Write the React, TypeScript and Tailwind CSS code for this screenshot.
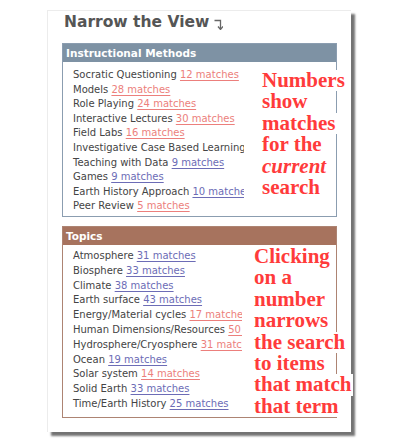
const red = "text-[#ec7f7c] decoration-[#ec7f7c]";
const blue = "text-[#6c6cb6] decoration-[#6c6cb6]";

type Item = { label: string; link?: string; tone?: "red" | "blue" };

const methods: Item[] = [
  { label: "Socratic Questioning", link: "12 matches", tone: "red" },
  { label: "Models", link: "28 matches", tone: "red" },
  { label: "Role Playing", link: "24 matches", tone: "red" },
  { label: "Interactive Lectures", link: "30 matches", tone: "red" },
  { label: "Field Labs", link: "16 matches", tone: "red" },
  { label: "Investigative Case Based Learning" },
  { label: "Teaching with Data", link: "9 matches", tone: "blue" },
  { label: "Games", link: "9 matches", tone: "blue" },
  { label: "Earth History Approach", link: "10 matches", tone: "blue" },
  { label: "Peer Review", link: "5 matches", tone: "red" },
];

const topics: Item[] = [
  { label: "Atmosphere", link: "31 matches", tone: "blue" },
  { label: "Biosphere", link: "33 matches", tone: "blue" },
  { label: "Climate", link: "38 matches", tone: "blue" },
  { label: "Earth surface", link: "43 matches", tone: "blue" },
  { label: "Energy/Material cycles", link: "17 matches", tone: "red" },
  { label: "Human Dimensions/Resources", link: "50 matches", tone: "red" },
  { label: "Hydrosphere/Cryosphere", link: "31 matches", tone: "red" },
  { label: "Ocean", link: "19 matches", tone: "blue" },
  { label: "Solar system", link: "14 matches", tone: "red" },
  { label: "Solid Earth", link: "33 matches", tone: "blue" },
  { label: "Time/Earth History", link: "25 matches", tone: "blue" },
];

function Row({ item }: { item: Item }) {
  return (
    <li className="whitespace-nowrap">
      {item.label}
      {item.link && (
        <>
          {" "}
          <a href="#" className={`underline underline-offset-2 ${item.tone === "red" ? red : blue}`}>
            {item.link}
          </a>
        </>
      )}
    </li>
  );
}

function Note({ lines }: { lines: React.ReactNode[] }) {
  return (
    <div className="flex w-max flex-col items-start whitespace-nowrap font-['Liberation_Serif',serif] font-bold text-[21px] leading-[21.4px] text-[#ff3b3b]">
      {lines.map((l, i) => (
        <span key={i} className="bg-white pl-[11px] pr-[2px]">
          {l}
        </span>
      ))}
    </div>
  );
}

export default function App() {
  return (
    <div className="w-[400px] h-[444px] bg-white overflow-hidden font-['DejaVu_Sans',Verdana,sans-serif]">
      <div className="relative ml-[47px] mt-[10px] w-[304px] h-[422px] bg-white border-l border-t border-[#ececec] shadow-[4px_4px_2px_rgba(0,0,0,0.55)]">
        <h2 className="flex items-center gap-[5px] pl-[16px] pt-[1px] h-[22px] text-[15.5px] font-bold text-[#555]">
          Narrow the View
          <svg width="9" height="11" viewBox="0 0 9 11" className="mt-[3px]">
            <path d="M0.5 1.5H6.5V9" fill="none" stroke="#666" strokeWidth="1.3" />
            <path d="M4 7.5L6.5 10.5L9 7.5" fill="none" stroke="#666" strokeWidth="1.3" />
          </svg>
        </h2>

        <section className="ml-[14px] mt-[10px] w-[275px] border border-[#8b9db0]">
          <div className="h-[18px] bg-[#7e92a4] pl-[3px] text-[10.5px] font-bold leading-[18px] text-white">
            Instructional Methods
          </div>
          <ul className="w-[181px] overflow-hidden pl-[10px] pt-[6px] pb-[2px] text-[10px] leading-[14.6px] text-[#444]">
            {methods.map((m) => (
              <Row key={m.label} item={m} />
            ))}
          </ul>
        </section>

        <section className="ml-[14px] mt-[9px] w-[275px] border border-[#ad8473]">
          <div className="h-[18px] bg-[#a7735e] pl-[3px] text-[10.5px] font-bold leading-[18px] text-white">
            Topics
          </div>
          <ul className="w-[179px] overflow-hidden pl-[10px] pt-[4px] pb-[5px] text-[10px] leading-[14.8px] text-[#444]">
            {topics.map((t) => (
              <Row key={t.label} item={t} />
            ))}
          </ul>
        </section>

        <div className="absolute left-[203px] top-[59px]">
          <Note
            lines={["Numbers", "show", "matches", "for the", <i key="c">current</i>, "search"]}
          />
        </div>
        <div className="absolute left-[195px] top-[235px]">
          <Note
            lines={["Clicking", "on a", "number", "narrows", "the search", "to items", "that match", "that term"]}
          />
        </div>
      </div>
    </div>
  );
}
